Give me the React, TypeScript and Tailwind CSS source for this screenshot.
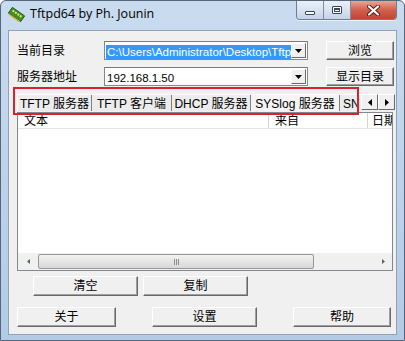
import React from 'react';

const cjk = { fontFamily: '"Liberation Sans", "Noto Sans CJK SC", sans-serif' };

const WinButton: React.FC<{ label: string; className?: string }> = ({ label, className = '' }) => (
  <div
    className={`flex items-center justify-center bg-[#f0f0f0] border border-t-white border-l-white border-r-[#696969] border-b-[#696969] shadow-[inset_-1px_-1px_0_#a0a0a0] text-[12px] text-black ${className}`}
  >
    {label}
  </div>
);

const Combo: React.FC<{ value: string; selected?: boolean }> = ({ value, selected }) => (
  <div className="flex h-[19px] w-[204px] items-center bg-white border border-[#828790] border-t-[#7a7a7a]">
    <div className="flex-1 overflow-hidden whitespace-nowrap pl-[1px]">
      {selected ? (
        <span className="inline-block bg-[#3399ff] px-[1px] text-[11.5px] leading-[15px] text-white">{value}</span>
      ) : (
        <span className="inline-block px-[1px] text-[11.5px] leading-[15px] text-black">{value}</span>
      )}
    </div>
    <div className="mr-[1px] flex h-[15px] w-[15px] items-center justify-center bg-[#f0f0f0] border border-t-white border-l-white border-r-[#696969] border-b-[#696969]">
      <svg width="7" height="4" viewBox="0 0 7 4">
        <path d="M0 0h7L3.5 4z" fill="#000" />
      </svg>
    </div>
  </div>
);

const Tab: React.FC<{ label: string; width: number; selected?: boolean }> = ({ label, width, selected }) => (
  <div
    className={`flex h-[17px] items-center justify-center whitespace-nowrap overflow-hidden border-r border-r-[#808080] text-[12px] ${selected ? 'bg-[#f4f4f4]' : 'bg-[#ececec]'}`}
    style={{ width }}
  >
    {label}
  </div>
);

const CaptionButtons = () => (
  <div className="flex h-[19px] overflow-hidden rounded-b-[4px] border border-t-0 border-[#6d7e94] shadow-[0_1px_0_rgba(255,255,255,0.6)]">
    <div className="flex w-[27px] items-center justify-center border-r border-r-[#7d8ea4] bg-gradient-to-b from-[#eaf1f9] via-[#d8e3f0] to-[#c3d3e6]">
      <div className="mt-[5px] h-[4px] w-[10px] rounded-[1px] border border-[#37475b] bg-white" />
    </div>
    <div className="flex w-[27px] items-center justify-center border-r border-r-[#7d8ea4] bg-gradient-to-b from-[#eaf1f9] via-[#d8e3f0] to-[#c3d3e6]">
      <div className="h-[8px] w-[10px] rounded-[1px] border border-[#37475b] bg-white p-[1px]">
        <div className="h-full w-full border border-[#37475b] border-t-2" />
      </div>
    </div>
    <div className="flex w-[45px] items-center justify-center bg-gradient-to-b from-[#e7a595] via-[#d0604d] to-[#c7422f]">
      <svg width="13" height="11" viewBox="0 0 13 11">
        <path d="M2 1.5l9 8M11 1.5l-9 8" stroke="#5a1a12" strokeWidth="4" strokeLinecap="round" />
        <path d="M2 1.5l9 8M11 1.5l-9 8" stroke="#fff" strokeWidth="2.2" strokeLinecap="round" />
      </svg>
    </div>
  </div>
);

const AppIcon = () => (
  <svg width="17" height="15" viewBox="0 0 17 15">
    <g transform="rotate(35 8.5 7.5)">
      <rect x="1" y="4" width="15" height="7" fill="#3f8f2e" stroke="#1f4f15" strokeWidth="0.8" />
      <rect x="3" y="5.5" width="2" height="2" fill="#f2e04a" />
      <rect x="6" y="5.5" width="2" height="2" fill="#f2e04a" />
      <rect x="9" y="5.5" width="2" height="2" fill="#f2e04a" />
      <rect x="12" y="5.5" width="2" height="2" fill="#f2e04a" />
      <rect x="2" y="11" width="13" height="1.5" fill="#d8b93a" />
    </g>
  </svg>
);

export default function App() {
  return (
    <div
      className="relative h-[341px] w-[405px] overflow-hidden rounded-t-[6px] border border-[#56677c] bg-gradient-to-b from-[#c9dbef] via-[#bed3ea] to-[#b3cbe6]"
      style={cjk}
    >
      {/* title bar */}
      <div className="flex h-[29px] items-start">
        <div className="ml-[7px] mt-[6px]">
          <AppIcon />
        </div>
        <div className="ml-[5px] mt-[5px] text-[12.5px] leading-[16px] text-black" style={{ fontFamily: '"Open Sans", "Noto Sans", sans-serif' }}>
          Tftpd64 by Ph. Jounin
        </div>
        <div className="ml-auto mr-[7px]">
          <CaptionButtons />
        </div>
      </div>

      {/* client area */}
      <div className="mx-[7px] h-[305px] border border-[#8ea2ba] bg-[#f0f0f0] text-black">
        <div className="flex h-[19px] items-center pl-[8px] mt-[10px]">
          <div className="w-[87px] text-[12px]">当前目录</div>
          <Combo value="C:\Users\Administrator\Desktop\Tftpd64" selected />
          <WinButton label="浏览" className="ml-[18px] h-[19px] w-[68px]" />
        </div>
        <div className="flex h-[19px] items-center pl-[8px] mt-[7px]">
          <div className="w-[87px] text-[12px]">服务器地址</div>
          <Combo value="192.168.1.50" />
          <WinButton label="显示目录" className="ml-[18px] h-[19px] w-[68px]" />
        </div>

        {/* tabs */}
        <div className="ml-[8px] mt-[7px] flex h-[18px] w-[378px] items-end">
          <div className="flex h-[17px] flex-1 overflow-hidden border-t border-t-white border-l border-l-white">
            <Tab label="TFTP 服务器" width={74} />
            <Tab label="TFTP 客户端" width={80} />
            <Tab label="DHCP 服务器" width={79} />
            <Tab label="SYSlog 服务器" width={89} selected />
            <div className="flex h-[17px] w-[20px] items-center overflow-hidden whitespace-nowrap bg-[#ececec] pl-[3px] text-[12px]">SNTP</div>
          </div>
          <div className="mb-[1px] flex">
            <div className="flex h-[16px] w-[17px] items-center justify-center border border-t-white border-l-white border-r-[#696969] border-b-[#696969] bg-[#f0f0f0]">
              <svg width="4" height="7" viewBox="0 0 4 7"><path d="M4 0v7L0 3.5z" fill="#000" /></svg>
            </div>
            <div className="flex h-[16px] w-[17px] items-center justify-center border border-t-white border-l-white border-r-[#696969] border-b-[#696969] bg-[#f0f0f0]">
              <svg width="4" height="7" viewBox="0 0 4 7"><path d="M0 0v7l4-3.5z" fill="#000" /></svg>
            </div>
          </div>
        </div>

        {/* list */}
        <div className="ml-[8px] mt-[1px] flex h-[159px] w-[376px] flex-col border border-[#828790] bg-white">
          <div className="flex h-[16px] shrink-0 border-b border-b-[#e5e5e5] text-[12px] leading-[16px]">
            <div className="w-[251px] border-r border-r-[#d5d5d5] pl-[6px]">文本</div>
            <div className="w-[99px] border-r border-r-[#d5d5d5] pl-[6px]">来自</div>
            <div className="flex-1 overflow-hidden whitespace-nowrap pl-[4px]">日期</div>
          </div>
          <div className="flex-1" />
          <div className="flex h-[17px] items-center bg-[#f0f0f0]">
            <div className="flex w-[20px] items-center justify-center">
              <svg width="3" height="5" viewBox="0 0 3 5"><path d="M3 0v5L0 2.5z" fill="#606060" /></svg>
            </div>
            <div className="flex h-[15px] w-[276px] items-center justify-center rounded-[2px] border border-[#979797] bg-gradient-to-b from-[#f2f2f2] to-[#d8d8d8]">
              <div className="flex gap-[1px]">
                <div className="h-[6px] w-[1px] bg-[#8c8c8c]" />
                <div className="h-[6px] w-[1px] bg-[#8c8c8c]" />
                <div className="h-[6px] w-[1px] bg-[#8c8c8c]" />
              </div>
            </div>
            <div className="flex-1" />
            <div className="flex w-[17px] items-center justify-center">
              <svg width="3" height="5" viewBox="0 0 3 5"><path d="M0 0v5l3-2.5z" fill="#606060" /></svg>
            </div>
          </div>
        </div>

        {/* buttons */}
        <div className="mt-[5px] flex pl-[24px]">
          <WinButton label="清空" className="h-[20px] w-[105px]" />
          <WinButton label="复制" className="ml-[5px] h-[20px] w-[105px]" />
        </div>
        <div className="mt-[11px] flex pl-[8px]">
          <WinButton label="关于" className="h-[20px] w-[99px]" />
          <WinButton label="设置" className="ml-[36px] h-[20px] w-[105px]" />
          <WinButton label="帮助" className="ml-[36px] h-[20px] w-[98px]" />
        </div>
      </div>

      {/* highlight annotation */}
      <div className="pointer-events-none absolute left-[12px] top-[86px] h-[28px] w-[346px] border-2 border-[#d8222c]" />
    </div>
  );
}
